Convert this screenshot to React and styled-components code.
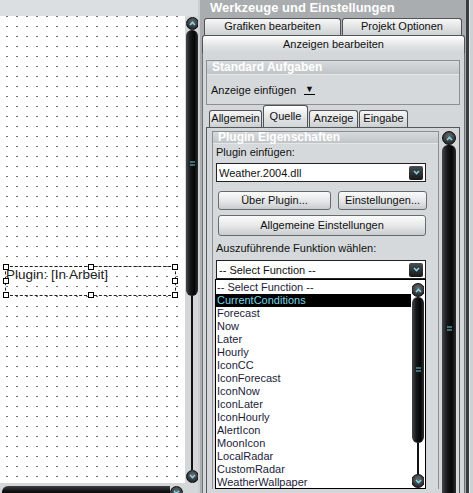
import styled, { createGlobalStyle } from "styled-components";

const GlobalStyle = createGlobalStyle`
  html, body {
    margin: 0;
    padding: 0;
    background: #c9cdcf;
  }
  body {
    font-family: "Liberation Sans", Arial, sans-serif;
    font-size: 11px;
    color: #111;
  }
  * {
    box-sizing: border-box;
  }
`;

const Screen = styled.div`
  display: flex;
  width: 473px;
  height: 493px;
  overflow: hidden;
  background: #cbcfd1;
`;

/* ---------- left: layout canvas ---------- */

const LeftPane = styled.div`
  width: 198px;
  flex-shrink: 0;
  display: flex;
  flex-direction: column;
  overflow: hidden;
`;

const CanvasTop = styled.div`
  height: 16px;
  flex-shrink: 0;
  background: #dcdfe2;
`;

const CanvasRow = styled.div`
  height: 467px;
  flex-shrink: 0;
  display: flex;
  background: #d3d7d9;
`;

const Canvas = styled.div`
  position: relative;
  width: 185px;
  flex-shrink: 0;
  background-color: #fff;
  background-image: linear-gradient(to bottom, transparent 1px, #fff 1px),
    linear-gradient(to right, #707070 2px, #fff 2px);
  background-size: 10px 10px;
  background-position: 6px 0, 6px 0;
`;

const Selection = styled.div`
  position: absolute;
  left: 5px;
  top: 250px;
  width: 171px;
  height: 30px;
  border: 1px dashed #222;
`;

const Handle = styled.span`
  position: absolute;
  left: calc(${(p) => p.$x} - 3px);
  top: calc(${(p) => p.$y} - 3px);
  width: 6px;
  height: 6px;
  background: #fff;
  border: 1px solid #000;
`;

const PluginCaption = styled.span`
  position: absolute;
  left: 0;
  top: 0;
  font-size: 13.5px;
  line-height: 16px;
  color: #222;
  white-space: nowrap;
`;

const CanvasBottom = styled.div`
  height: 16px;
  flex-shrink: 0;
  display: flex;
  align-items: flex-start;
  padding-top: 3px;
  background: #d3d7d9;
`;

const HThumb = styled.div`
  width: 168px;
  height: 13px;
  margin-left: 2px;
  border-radius: 6px 0 0 6px;
  background: linear-gradient(to bottom, #3c3e40, #111 40%, #050505 70%, #2a2c2e);
`;

/* ---------- scrollbars ---------- */

const ScrollTrack = styled.div`
  width: ${(p) => p.$w}px;
  flex-shrink: 0;
  display: flex;
  flex-direction: column;
  align-items: center;
  padding-top: ${(p) => p.$top || 0}px;
  margin: 0 ${(p) => p.$mr || 0}px 0 ${(p) => p.$ml || 0}px;
  overflow: hidden;
`;

const RoundButton = styled.div`
  width: ${(p) => p.$size}px;
  height: ${(p) => p.$size}px;
  flex-shrink: 0;
  border-radius: 50%;
  border: 1px solid #0c0c0c;
  background: radial-gradient(circle at 50% 35%, #6a6e72, #2a2c2e 72%);
  display: flex;
  align-items: center;
  justify-content: center;
`;

const Thumb = styled.div`
  width: 100%;
  height: ${(p) => p.$h}px;
  flex-shrink: 0;
  border-radius: 6px;
  background: linear-gradient(to right, #45484b, #17181a 35%, #050505 70%, #2c2e30);
  display: flex;
  flex-direction: column;
  align-items: center;
  padding-top: ${(p) => p.$grip}px;
`;

const Rail = styled.div`
  flex: 1;
  width: 2px;
  background: #111;
`;

const Chevron = ({ down }) => (
  <svg width="7" height="5" viewBox="0 0 7 5">
    <path
      d={down ? "M1 1 L3.5 3.5 L6 1" : "M1 4 L3.5 1.5 L6 4"}
      stroke="#7fd6ea"
      strokeWidth="1.6"
      fill="none"
    />
  </svg>
);

const Grip = () => (
  <svg width="5" height="5" viewBox="0 0 5 5">
    <rect x="0" y="0.5" width="5" height="1" fill="#6fcfe2" />
    <rect x="0" y="3.5" width="5" height="1" fill="#6fcfe2" />
  </svg>
);

const ScrollBar = ({ w, size, thumb, grip, top, ml, mr, down = true }) => (
  <ScrollTrack $w={w} $top={top} $ml={ml} $mr={mr}>
    <RoundButton $size={size}>
      <Chevron />
    </RoundButton>
    <Thumb $h={thumb} $grip={grip}>
      <Grip />
    </Thumb>
    <Rail />
    {down && (
      <RoundButton $size={size}>
        <Chevron down />
      </RoundButton>
    )}
  </ScrollTrack>
);

/* ---------- right: tool window ---------- */

const ToolWindow = styled.div`
  width: 266px;
  flex-shrink: 0;
  margin-left: 2px;
  display: flex;
  flex-direction: column;
  background: #a9adb0;
`;

const EdgeDark = styled.div`
  width: 3px;
  flex-shrink: 0;
  background: #3a3d40;
`;

const EdgeLight = styled.div`
  width: 4px;
  flex-shrink: 0;
  background: #cdd1d3;
  border-left: 1px solid #e6e8e9;
`;

const Header = styled.div`
  height: 16px;
  flex-shrink: 0;
  padding-left: 10px;
  font-size: 13px;
  font-weight: bold;
  line-height: 16px;
  color: #fff;
  white-space: nowrap;
`;

const TabRow = styled.div`
  display: flex;
  gap: 1px;
  flex-shrink: 0;
  padding-left: ${(p) => p.$pl || 0}px;
  margin-top: ${(p) => p.$mt || 0}px;
`;

const Tab = styled.div`
  width: ${(p) => p.$w}px;
  height: ${(p) => p.$h || 17}px;
  border: 1px solid #505457;
  border-bottom: none;
  border-radius: 3px 3px 0 0;
  background: ${(p) =>
    p.$active
      ? "linear-gradient(#ffffff, #dfe2e3 60%, #d3d7d9)"
      : "linear-gradient(#f6f6f6, #e0e2e3 55%, #cdd0d2)"};
  font-size: 11px;
  line-height: ${(p) => (p.$h || 17) - 2}px;
  text-align: center;
  white-space: nowrap;
  color: #111;
`;

const Panel = styled.div`
  flex: 1;
  width: 263px;
  margin-left: 2px;
  display: flex;
  flex-direction: column;
  background: #d3d7d9;
  border-left: 1px solid #6d7174;
  border-right: 1px solid #6d7174;
  padding: 7px 4px 0 3px;
  min-height: 0;
`;

const Group = styled.div`
  border: 1px solid #8c9093;
  background: #d5d9db;
  display: flex;
  flex-direction: column;
  ${(p) => p.$open && "border-bottom: none; flex: 1; min-width: 0;"}
`;

const GroupTitle = styled.div`
  height: ${(p) => p.$h}px;
  flex-shrink: 0;
  padding-left: 5px;
  background: linear-gradient(#d7dbdd, #c0c4c7);
  border-bottom: 1px solid #e4e6e7;
  color: #fff;
  font-size: 12px;
  font-weight: bold;
  line-height: ${(p) => p.$h - 1}px;
  white-space: nowrap;
`;

const TaskRow = styled.div`
  height: 29px;
  display: flex;
  align-items: center;
  padding-left: 4px;
  gap: 8px;
  font-size: 11px;
`;

const DropMark = styled.span`
  font-size: 9px;
  line-height: 9px;
  border-bottom: 1px solid #000;
  padding: 0 1px;
`;

const InnerTabs = styled.div`
  height: 22px;
  flex-shrink: 0;
  display: flex;
  align-items: flex-end;
  gap: 1px;
  padding-left: 3px;
`;

const InnerPanel = styled.div`
  flex: 1;
  display: flex;
  align-items: flex-start;
  border: 1px solid #54585b;
  border-bottom: none;
  background: #d3d7d9;
  padding: 3px 3px 0 5px;
  min-height: 0;
  overflow: hidden;
`;

const GroupBody = styled.div`
  display: flex;
  flex-direction: column;
  padding-left: 3px;
`;

const Label = styled.div`
  margin-top: ${(p) => p.$mt}px;
  height: 13px;
  line-height: 13px;
  font-size: 11px;
  white-space: nowrap;
`;

const Select = styled.div`
  margin-top: ${(p) => p.$mt}px;
  width: 210px;
  height: 19px;
  flex-shrink: 0;
  display: flex;
  align-items: center;
  justify-content: space-between;
  padding: 0 2px 0 2px;
  background: #fff;
  border: 1px solid #222;
  font-size: 11px;
`;

const SelectButton = styled.div`
  width: 14px;
  height: 14px;
  border-radius: 2px;
  background: linear-gradient(#4a4d50, #161718);
  display: flex;
  align-items: center;
  justify-content: center;
`;

const ButtonRow = styled.div`
  display: flex;
  gap: 7px;
  margin: ${(p) => p.$mt}px 0 0 2px;
`;

const Button = styled.div`
  width: ${(p) => p.$w}px;
  height: ${(p) => p.$h || 19}px;
  border: 1px solid #676b6e;
  border-radius: 3px;
  background: linear-gradient(#fbfbfb, #e6e8e9 50%, #c9ccce);
  font-size: 11px;
  line-height: ${(p) => (p.$h || 19) - 2}px;
  text-align: center;
  white-space: nowrap;
`;

const ListBox = styled.div`
  width: 211px;
  height: 210px;
  flex-shrink: 0;
  margin-left: -1px;
  display: flex;
  background: #fff;
  border: 1px solid #000;
`;

const Items = styled.div`
  width: 195px;
  flex-shrink: 0;
  padding-top: 1px;
`;

const Item = styled.div`
  height: 13px;
  line-height: 13px;
  padding-left: 1px;
  font-size: 11px;
  white-space: nowrap;
  color: ${(p) => (p.$selected ? "#79d3e6" : "#1c1c3a")};
  background: ${(p) => (p.$selected ? "#000" : "transparent")};
`;

const functions = [
  "-- Select Function --",
  "CurrentConditions",
  "Forecast",
  "Now",
  "Later",
  "Hourly",
  "IconCC",
  "IconForecast",
  "IconNow",
  "IconLater",
  "IconHourly",
  "AlertIcon",
  "MoonIcon",
  "LocalRadar",
  "CustomRadar",
  "WeatherWallpaper",
];

const handles = [
  ["0%", "0%"],
  ["50%", "0%"],
  ["100%", "0%"],
  ["0%", "50%"],
  ["100%", "50%"],
  ["0%", "100%"],
  ["50%", "100%"],
  ["100%", "100%"],
];

export default function App() {
  return (
    <>
      <GlobalStyle />
      <Screen>
        <LeftPane>
          <CanvasTop />
          <CanvasRow>
            <Canvas>
              <Selection>
                <PluginCaption>Plugin: [In Arbeit]</PluginCaption>
                {handles.map(([x, y]) => (
                  <Handle key={x + y} $x={x} $y={y} />
                ))}
              </Selection>
            </Canvas>
            <ScrollBar w={12} size={13} thumb={266} grip={131} top={1} ml={1} />
          </CanvasRow>
          <CanvasBottom>
            <HThumb />
            <RoundButton $size={13}>
              <Chevron down />
            </RoundButton>
          </CanvasBottom>
        </LeftPane>

        <ToolWindow>
          <Header>Werkzeuge und Einstellungen</Header>
          <TabRow $pl={4} $mt={2}>
            <Tab $w={137}>Grafiken bearbeiten</Tab>
            <Tab $w={120}>Projekt Optionen</Tab>
          </TabRow>
          <TabRow $pl={2}>
            <Tab $w={263} $h={18} $active>
              Anzeigen bearbeiten
            </Tab>
          </TabRow>
          <Panel>
            <Group>
              <GroupTitle $h={14}>Standard Aufgaben</GroupTitle>
              <TaskRow>
                Anzeige einfügen
                <DropMark>▼</DropMark>
              </TaskRow>
            </Group>
            <InnerTabs>
              <Tab $w={53}>Allgemein</Tab>
              <Tab $w={45} $h={22} $active>
                Quelle
              </Tab>
              <Tab $w={49}>Anzeige</Tab>
              <Tab $w={49}>Eingabe</Tab>
            </InnerTabs>
            <InnerPanel>
              <Group $open>
                <GroupTitle $h={12}>Plugin Eigenschaften</GroupTitle>
                <GroupBody>
                  <Label $mt={2}>Plugin einfügen:</Label>
                  <Select $mt={4}>
                    Weather.2004.dll
                    <SelectButton>
                      <Chevron down />
                    </SelectButton>
                  </Select>
                  <ButtonRow $mt={9}>
                    <Button $w={113}>Über Plugin...</Button>
                    <Button $w={89}>Einstellungen...</Button>
                  </ButtonRow>
                  <ButtonRow $mt={5}>
                    <Button $w={208} $h={21}>
                      Allgemeine Einstellungen
                    </Button>
                  </ButtonRow>
                  <Label $mt={6}>Auszuführende Funktion wählen:</Label>
                  <Select $mt={5}>
                    -- Select Function --
                    <SelectButton>
                      <Chevron down />
                    </SelectButton>
                  </Select>
                  <ListBox>
                    <Items>
                      {functions.map((f, i) => (
                        <Item key={f} $selected={i === 1}>
                          {f}
                        </Item>
                      ))}
                    </Items>
                    <ScrollBar w={12} size={14} thumb={146} grip={70} top={3} ml={1} />
                  </ListBox>
                </GroupBody>
              </Group>
              <ScrollBar w={14} size={14} thumb={400} grip={181} ml={3} down={false} />
            </InnerPanel>
          </Panel>
        </ToolWindow>
        <EdgeDark />
        <EdgeLight />
      </Screen>
    </>
  );
}
